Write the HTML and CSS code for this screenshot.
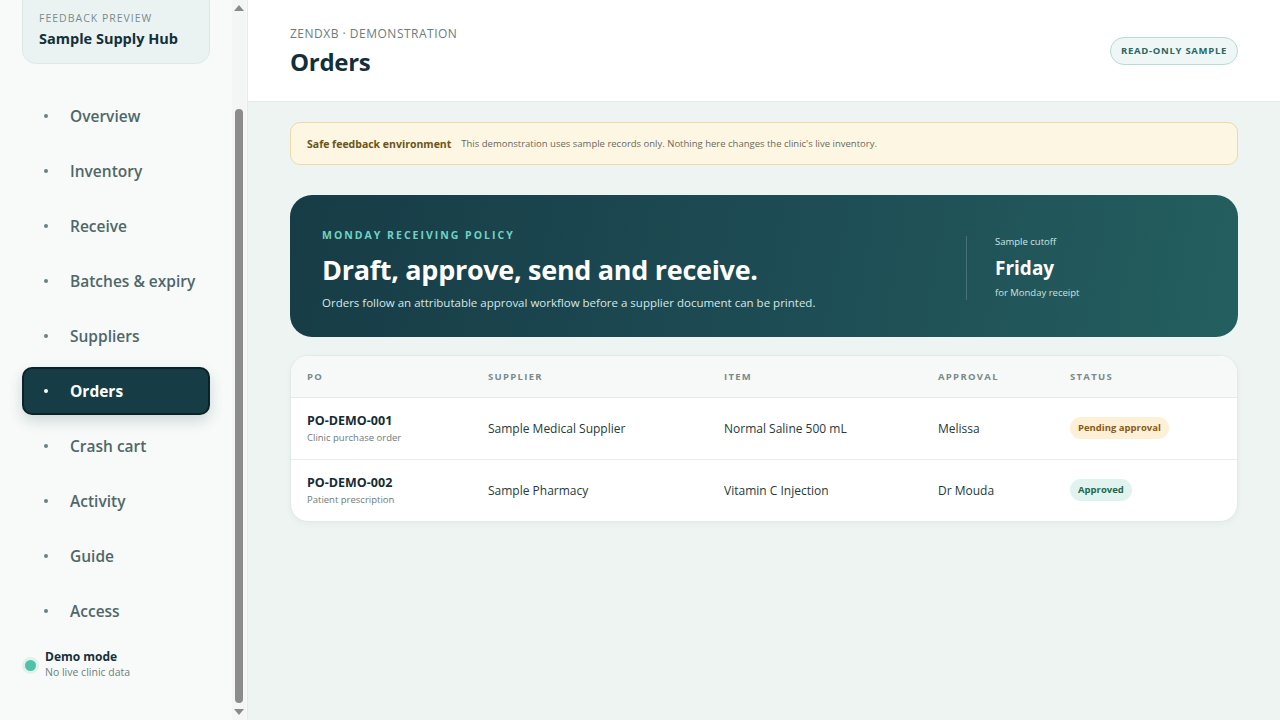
FILE: index.html
```html
<!DOCTYPE html>
<html lang="en">
<head>
<meta charset="utf-8">
<title>Orders – Sample Supply Hub</title>
<link rel="stylesheet" href="styles.css">
</head>
<body>
<div class="app">
  <aside class="sidebar">
    <div class="side-inner">
      <div class="brand">
        <div class="brand-eyebrow">FEEDBACK PREVIEW</div>
        <div class="brand-name">Sample Supply Hub</div>
      </div>
      <nav class="nav">
        <a class="nav-item"><span class="dot"></span>Overview</a>
        <a class="nav-item"><span class="dot"></span>Inventory</a>
        <a class="nav-item"><span class="dot"></span>Receive</a>
        <a class="nav-item"><span class="dot"></span>Batches &amp; expiry</a>
        <a class="nav-item"><span class="dot"></span>Suppliers</a>
        <a class="nav-item active"><span class="dot"></span>Orders</a>
        <a class="nav-item"><span class="dot"></span>Crash cart</a>
        <a class="nav-item"><span class="dot"></span>Activity</a>
        <a class="nav-item"><span class="dot"></span>Guide</a>
        <a class="nav-item"><span class="dot"></span>Access</a>
      </nav>
      <div class="demo">
        <span class="demo-dot"></span>
        <div>
          <div class="demo-title">Demo mode</div>
          <div class="demo-sub">No live clinic data</div>
        </div>
      </div>
    </div>
    <div class="scrollbar">
      <span class="arrow up"></span>
      <div class="track"><div class="thumb"></div></div>
      <span class="arrow down"></span>
    </div>
  </aside>
  <main class="main">
    <header class="topbar">
      <div>
        <div class="crumb">ZENDXB · DEMONSTRATION</div>
        <h1 class="title">Orders</h1>
      </div>
      <span class="ro-badge">READ-ONLY SAMPLE</span>
    </header>
    <div class="content">
      <div class="notice">
        <strong>Safe feedback environment</strong>
        <span>This demonstration uses sample records only. Nothing here changes the clinic's live inventory.</span>
      </div>
      <section class="hero">
        <div class="hero-main">
          <div class="hero-eyebrow">MONDAY RECEIVING POLICY</div>
          <h2 class="hero-title">Draft, approve, send and receive.</h2>
          <p class="hero-text">Orders follow an attributable approval workflow before a supplier document can be printed.</p>
        </div>
        <div class="hero-side">
          <div class="hs-label">Sample cutoff</div>
          <div class="hs-value">Friday</div>
          <div class="hs-sub">for Monday receipt</div>
        </div>
      </section>
      <div class="table-card">
        <table class="orders">
          <thead>
            <tr><th class="c-po">PO</th><th class="c-sup">SUPPLIER</th><th class="c-item">ITEM</th><th class="c-appr">APPROVAL</th><th>STATUS</th></tr>
          </thead>
          <tbody>
            <tr>
              <td><div class="po-id">PO-DEMO-001</div><div class="po-sub">Clinic purchase order</div></td>
              <td>Sample Medical Supplier</td>
              <td>Normal Saline 500 mL</td>
              <td>Melissa</td>
              <td><span class="pill pending">Pending approval</span></td>
            </tr>
            <tr>
              <td><div class="po-id">PO-DEMO-002</div><div class="po-sub">Patient prescription</div></td>
              <td>Sample Pharmacy</td>
              <td>Vitamin C Injection</td>
              <td>Dr Mouda</td>
              <td><span class="pill approved">Approved</span></td>
            </tr>
          </tbody>
        </table>
      </div>
    </div>
  </main>
</div>
</body>
</html>
```

FILE: styles.css
```css
* { box-sizing: border-box; }
html, body { margin: 0; height: 100%; }
body {
  font-family: "Open Sans", "Noto Sans", "Liberation Sans", sans-serif;
  color: #16303a;
  background: #edf4f2;
  overflow: hidden;
}
.app { display: flex; height: 720px; }

/* Sidebar */
.sidebar {
  width: 248px;
  flex: none;
  display: flex;
  background: #f7faf9;
  border-right: 1px solid #e3ebe9;
}
.side-inner {
  flex: 1;
  padding: 0 22px 0 22px;
  display: flex;
  flex-direction: column;
  min-width: 0;
}
.brand {
  margin-top: -12px;
  background: #eaf3f2;
  border: 1px solid #dce9e7;
  border-radius: 14px;
  padding: 22px 16px 14px 16px;
  width: 188px;
}
.brand-eyebrow {
  font-size: 10.5px;
  letter-spacing: 1px;
  color: #7b8b8c;
  line-height: 14px;
}
.brand-name {
  font-weight: 700;
  font-size: 14.5px;
  color: #12303a;
  margin-top: 4px;
  line-height: 20px;
}
.nav {
  display: flex;
  flex-direction: column;
  gap: 7px;
  margin-top: 28px;
}
.nav-item {
  display: flex;
  align-items: center;
  height: 48px;
  width: 188px;
  padding-left: 20px;
  border-radius: 10px;
  font-size: 15.5px;
  font-weight: 600;
  color: #50676a;
  border: 2px solid transparent;
}
.nav-item .dot {
  width: 4px; height: 4px;
  border-radius: 50%;
  background: #6b8083;
  margin-right: 22px;
}
.nav-item.active {
  background: #163d45;
  border-color: #0b2228;
  color: #ffffff;
  font-weight: 700;
  box-shadow: 0 6px 14px rgba(22, 61, 69, 0.18);
}
.nav-item.active .dot { background: #ffffff; }
.demo {
  margin-top: auto;
  margin-bottom: 41px;
  display: flex;
  align-items: center;
  gap: 9px;
  padding-left: 3px;
}
.demo-dot {
  width: 11px; height: 11px;
  border-radius: 50%;
  background: #4fc2a8;
  box-shadow: 0 0 0 3px #dff2ec;
  margin-top: 2px;
}
.demo-title { font-weight: 700; font-size: 12px; color: #16303a; line-height: 16px; }
.demo-sub { font-size: 10.5px; color: #6f7f80; line-height: 14px; }

.scrollbar {
  width: 14px;
  flex: none;
  margin-right: 1px;
  display: flex;
  flex-direction: column;
  align-items: center;
  background: #f4f6f6;
}
.arrow { width: 0; height: 0; border-left: 5px solid transparent; border-right: 5px solid transparent; margin: 5px 0; }
.arrow.up { border-bottom: 6px solid #8a8a8a; }
.arrow.down { border-top: 6px solid #8a8a8a; }
.track { flex: 1; width: 100%; display: flex; justify-content: center; padding-top: 93px; padding-bottom: 1px; }
.thumb { width: 8px; height: 100%; background: #8c8c8c; border-radius: 4px; }

/* Main */
.main { flex: 1; display: flex; flex-direction: column; min-width: 0; }
.topbar {
  height: 102px;
  background: #ffffff;
  border-bottom: 1px solid #e3ebe9;
  padding: 0 42px;
  display: flex;
  align-items: center;
  justify-content: space-between;
}
.crumb {
  font-size: 12px;
  letter-spacing: 0.5px;
  color: #6d7c7e;
  line-height: 16px;
  margin-top: 2px;
}
.title {
  margin: 4px 0 0 0;
  font-size: 24px;
  font-weight: 700;
  color: #12303a;
  line-height: 32px;
  letter-spacing: -0.3px;
}
.ro-badge {
  display: inline-flex;
  align-items: center;
  height: 28px;
  padding: 0 10px;
  border-radius: 14px;
  border: 1px solid #b9dad6;
  background: #eef7f6;
  color: #2b6662;
  font-size: 9.5px;
  font-weight: 700;
  letter-spacing: 0.7px;
}

.content { padding: 20px 42px; }
.notice {
  height: 43px;
  background: #fdf6e3;
  border: 1px solid #eadba9;
  border-radius: 10px;
  display: flex;
  align-items: center;
  padding: 0 16px;
  gap: 10px;
}
.notice strong { font-size: 10.5px; color: #6b5419; font-weight: 700; }
.notice span { font-size: 9.5px; color: #6a6a5e; }

.hero {
  margin-top: 30px;
  height: 142px;
  border-radius: 22px;
  background: linear-gradient(100deg, #173c46 0%, #1e4d55 55%, #245f5f 100%);
  display: flex;
  align-items: center;
  padding: 0 32px;
  color: #ffffff;
}
.hero-main { flex: 1; padding-top: 8px; }
.hero-eyebrow {
  font-size: 10.5px;
  font-weight: 700;
  letter-spacing: 2px;
  color: #6fd3c3;
  line-height: 14px;
}
.hero-title {
  margin: 10px 0 0 0;
  font-size: 27px;
  font-weight: 700;
  line-height: 36px;
  letter-spacing: -0.3px;
}
.hero-text {
  margin: 6px 0 0 0;
  font-size: 11.5px;
  color: #d6e7e6;
  line-height: 18px;
}
.hero-side {
  width: 240px;
  border-left: 1px solid rgba(255,255,255,0.18);
  padding-left: 28px;
  height: 64px;
  display: flex;
  flex-direction: column;
  justify-content: center;
  margin-top: 4px;
}
.hs-label { font-size: 9.5px; color: #d3e5e3; line-height: 13px; margin-top: -3px; }
.hs-value { font-size: 19px; font-weight: 700; line-height: 26px; margin-top: 7px; }
.hs-sub { font-size: 9.5px; color: #cfe2df; line-height: 13px; margin-top: 5px; }

.table-card {
  margin-top: 18px;
  background: #ffffff;
  border: 1px solid #e1eae8;
  border-radius: 18px;
  overflow: hidden;
  box-shadow: 0 2px 6px rgba(20, 60, 60, 0.04);
}
.orders { width: 100%; border-collapse: collapse; table-layout: fixed; }
.orders th {
  background: #f6f9f8;
  height: 41px;
  text-align: left;
  font-size: 9.5px;
  font-weight: 700;
  letter-spacing: 1.3px;
  color: #7b8a8b;
  border-bottom: 1px solid #e3ebe9;
  padding: 0 16px;
}
.orders td {
  height: 62px;
  padding: 0 16px;
  font-size: 12px;
  color: #243a3d;
  vertical-align: middle;
}
.orders tbody tr + tr td { border-top: 1px solid #e6eeec; }
.c-po { width: 181px; }
.c-sup { width: 236px; }
.c-item { width: 214px; }
.c-appr { width: 132px; }
.po-id { font-weight: 700; font-size: 12.5px; color: #142d35; line-height: 17px; }
.po-sub { font-size: 9.5px; color: #6d7b7c; line-height: 14px; margin-top: 2px; }
.pill {
  display: inline-block;
  height: 22px;
  line-height: 22px;
  padding: 0 8px;
  border-radius: 11px;
  font-size: 9.5px;
  font-weight: 700;
}
.pill.pending { background: #fdf0d6; color: #8a5b14; }
.pill.approved { background: #e0f3ee; color: #23684f; }
```
